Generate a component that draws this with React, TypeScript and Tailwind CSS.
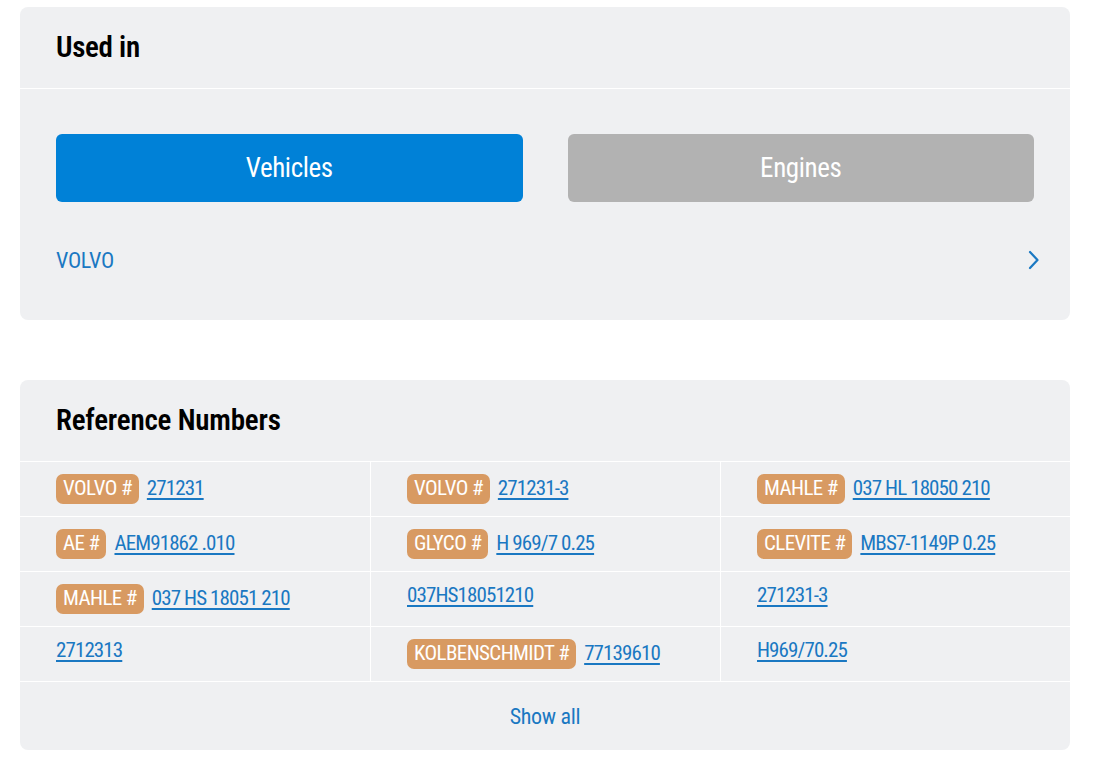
type RefItem = {
  brand?: string;
  number: string;
};

const refs: RefItem[] = [
  { brand: "VOLVO #", number: "271231" },
  { brand: "VOLVO #", number: "271231-3" },
  { brand: "MAHLE #", number: "037 HL 18050 210" },
  { brand: "AE #", number: "AEM91862 .010" },
  { brand: "GLYCO #", number: "H 969/7 0.25" },
  { brand: "CLEVITE #", number: "MBS7-1149P 0.25" },
  { brand: "MAHLE #", number: "037 HS 18051 210" },
  { number: "037HS18051210" },
  { number: "271231-3" },
  { number: "2712313" },
  { brand: "KOLBENSCHMIDT #", number: "77139610" },
  { number: "H969/70.25" },
];

function RefCell({ item, index }: { item: RefItem; index: number }) {
  return (
    <div
      className={`flex h-[55px] items-start gap-2 border-t border-white px-9 pt-[12px] ${
        index % 3 === 0 ? "" : "border-l"
      }`}
    >
      {item.brand ? (
        <div className="flex h-[30px] items-center gap-2">
          <span className="flex h-[30px] items-center rounded-[7px] bg-[#d89a62] px-[7px] text-[21px] tracking-[-0.6px] text-white">
            {item.brand}
          </span>
          <a
            href="#"
            className="text-[21px] tracking-[-0.9px] text-[#1a78c2] underline decoration-[1.5px] underline-offset-[3px]"
          >
            {item.number}
          </a>
        </div>
      ) : (
        <a
          href="#"
          className="text-[21px] leading-[22px] tracking-[-0.9px] text-[#1a78c2] underline decoration-[1.5px] underline-offset-[3px]"
        >
          {item.number}
        </a>
      )}
    </div>
  );
}

export default function App() {
  return (
    <div
      className="min-h-screen bg-white pl-5 pr-[23px] pt-[7px]"
      style={{ fontFamily: '"Roboto Condensed", "Liberation Sans", sans-serif' }}
    >
      {/* Used in */}
      <section className="rounded-lg bg-[#eff0f2]">
        <div className="flex h-[82px] items-center border-b border-white px-9">
          <h2 className="text-[29px] font-semibold tracking-[-0.3px] text-black">Used in</h2>
        </div>
        <div className="px-9 pb-[30px] pt-[45px]">
          <div className="grid grid-cols-2 gap-[45px]">
            <button className="flex h-[68px] items-center justify-center rounded-md bg-[#0081d7] text-[27px] tracking-[-0.4px] text-white">
              Vehicles
            </button>
            <button className="flex h-[68px] items-center justify-center rounded-md bg-[#b2b2b2] text-[27px] tracking-[-0.4px] text-white">
              Engines
            </button>
          </div>
          <a href="#" className="mt-[28px] flex h-[60px] items-center justify-between">
            <span className="text-[22px] tracking-[-0.3px] text-[#1a78c2]">VOLVO</span>
            <svg width="12" height="20" viewBox="0 0 12 20" fill="none" className="mr-[-5px]">
              <path d="M3 2l7.5 8L3 18" stroke="#1a78c2" strokeWidth="2.2" strokeLinecap="round" strokeLinejoin="round" />
            </svg>
          </a>
        </div>
      </section>

      {/* Reference Numbers */}
      <section className="mt-[60px] overflow-hidden rounded-lg bg-[#eff0f2]">
        <div className="flex h-[81px] items-center px-9">
          <h2 className="text-[29px] font-semibold tracking-[-0.2px] text-black">Reference Numbers</h2>
        </div>
        <div className="grid grid-cols-3">
          {refs.map((item, i) => (
            <RefCell key={i} item={item} index={i} />
          ))}
        </div>
        <div className="flex h-[69px] items-center justify-center border-t border-white">
          <a href="#" className="text-[22px] tracking-[-0.3px] text-[#1a78c2]">
            Show all
          </a>
        </div>
      </section>
    </div>
  );
}
